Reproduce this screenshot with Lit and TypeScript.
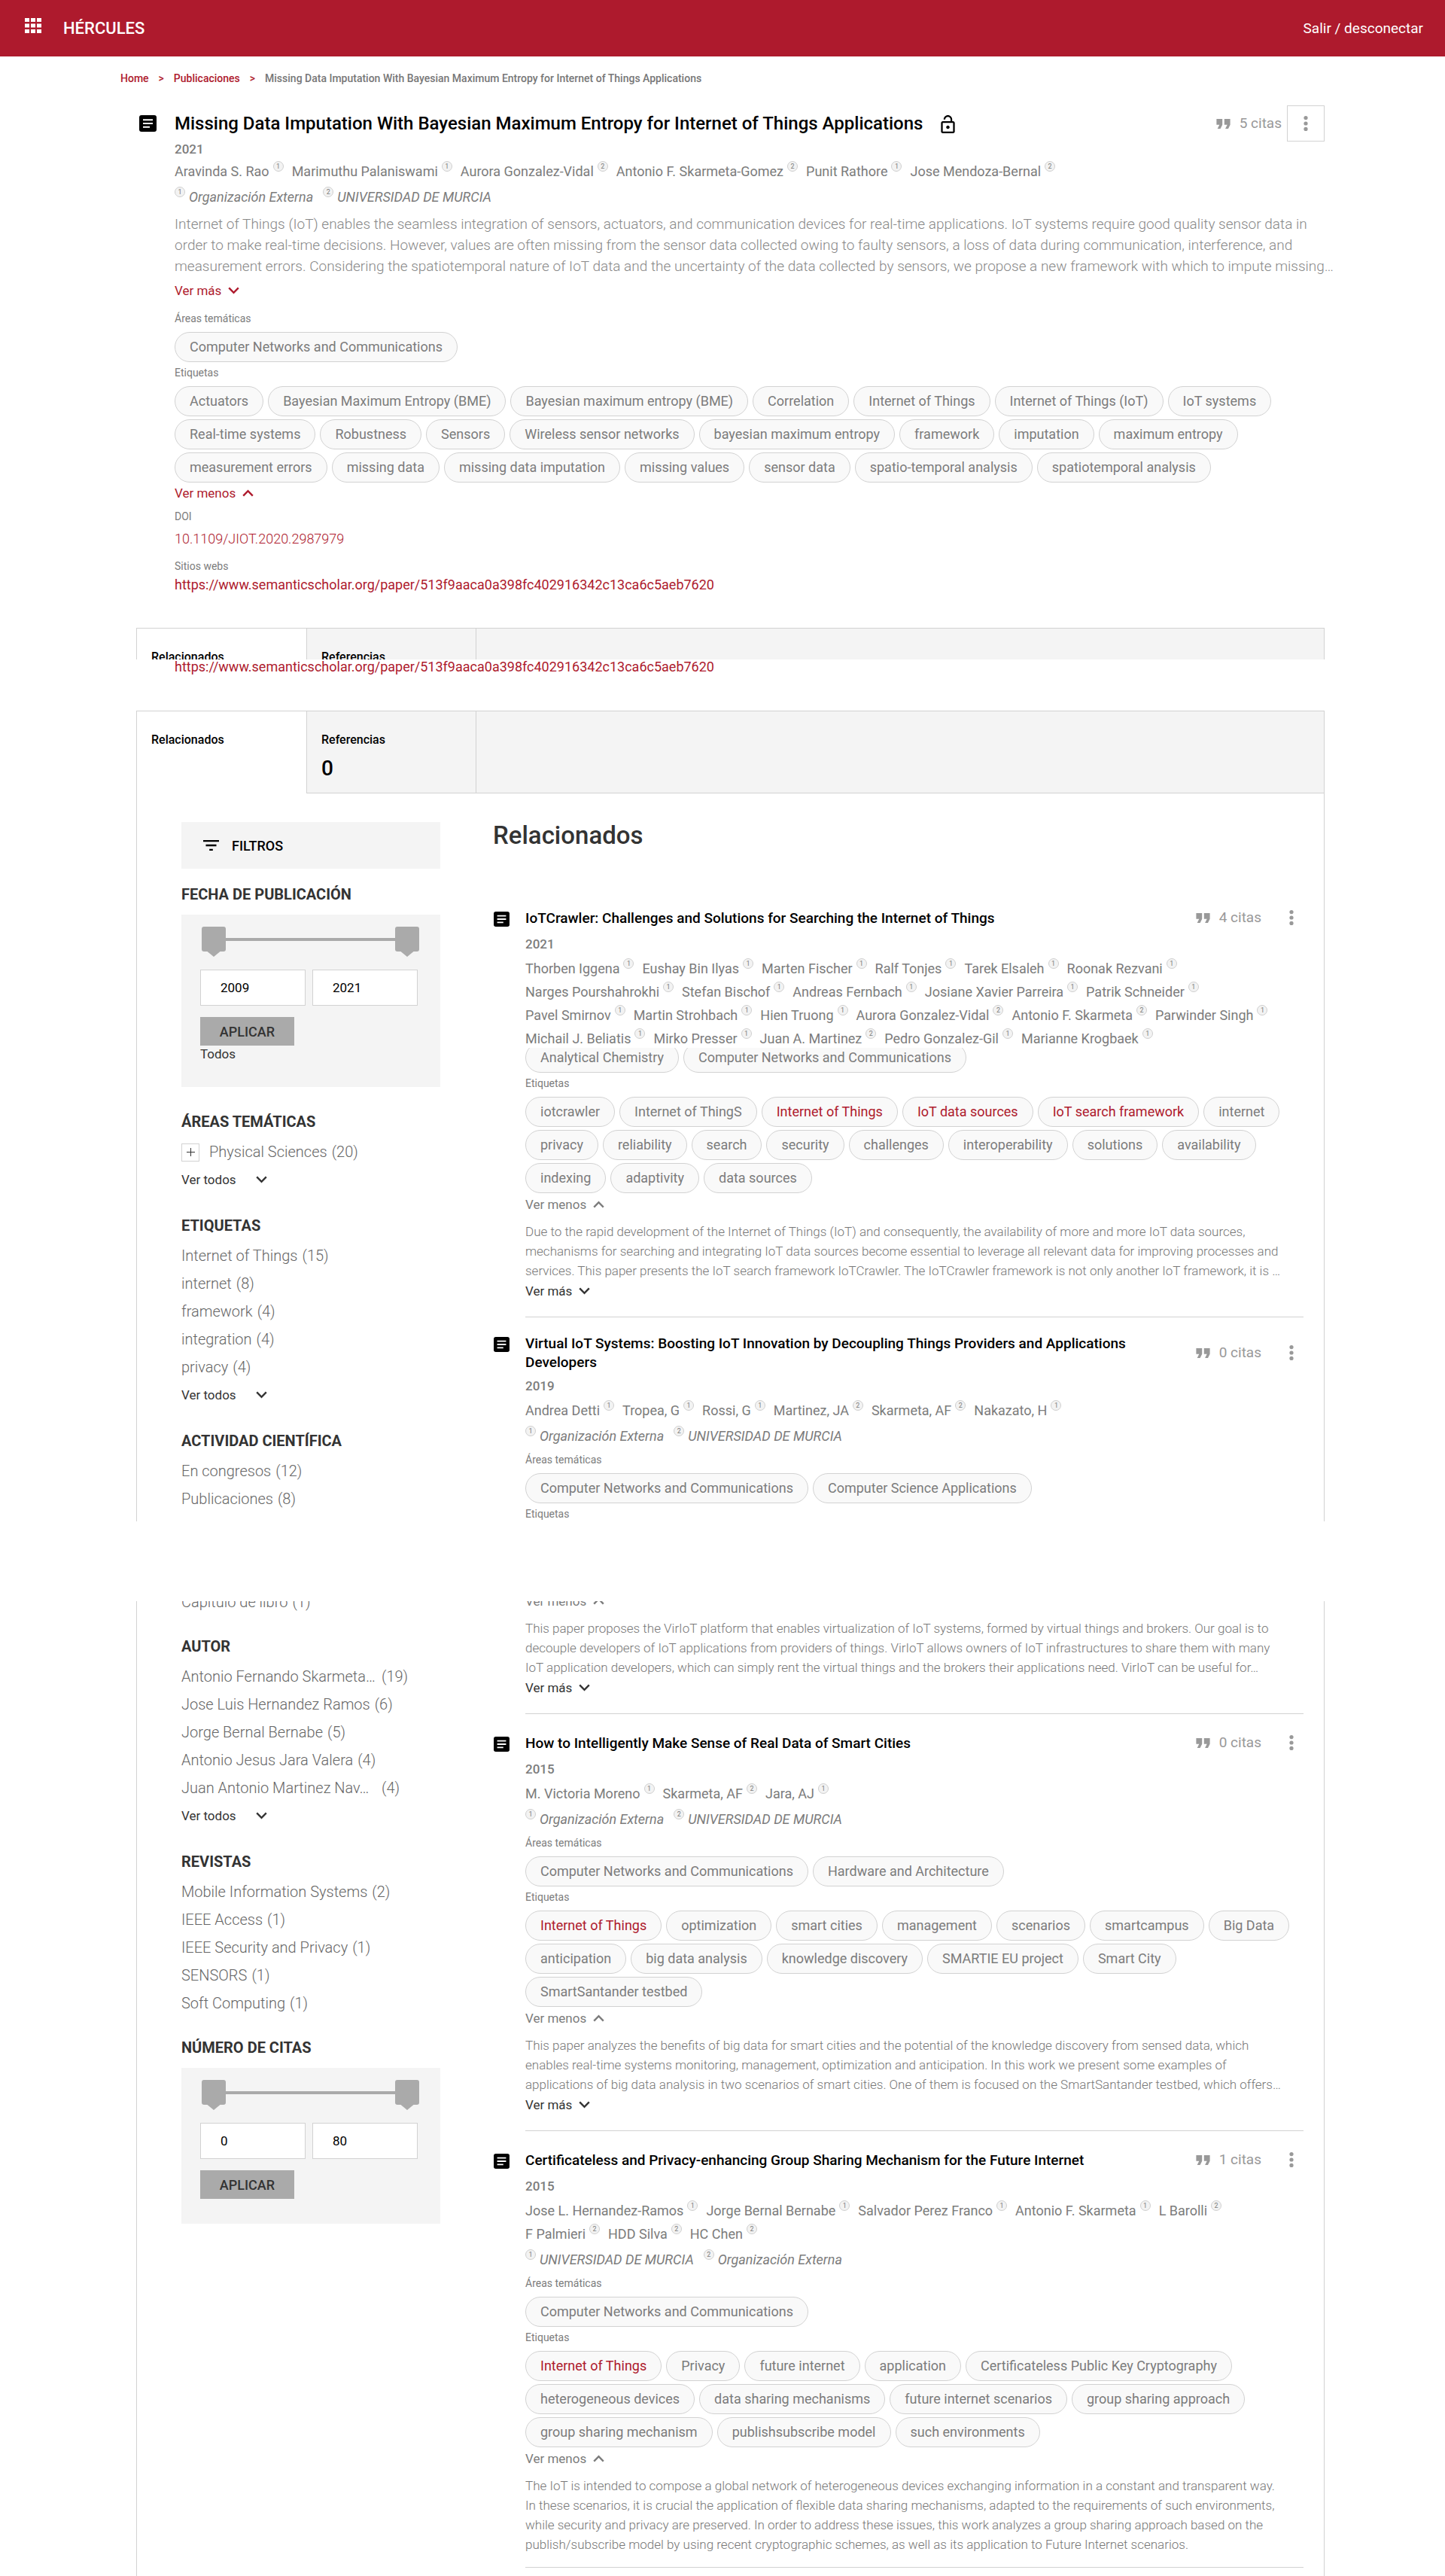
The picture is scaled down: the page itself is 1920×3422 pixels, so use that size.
import { LitElement, html, css, svg, nothing } from "lit";
import { customElement, property } from "lit/decorators.js";
import { classMap } from "lit/directives/class-map.js";

type Author = [name: string, org: number];
type Tag = string | { text: string; hot: true };
type FacetItem = { text: string; count: number; cut?: boolean; nested?: boolean };

interface Publication {
  title: string;
  year: string;
  citations: number;
  authors: Author[];
  orgs: string[];
  areas: Tag[];
  tags: Tag[];
  summary: string;
  more: boolean;
}

const hot = (text: string): Tag => ({ text, hot: true });

const DETAIL = {
  title: "Missing Data Imputation With Bayesian Maximum Entropy for Internet of Things Applications",
  year: "2021",
  authors: [
    ["Aravinda S. Rao", 1],
    ["Marimuthu Palaniswami", 1],
    ["Aurora Gonzalez-Vidal", 2],
    ["Antonio F. Skarmeta-Gomez", 2],
    ["Punit Rathore", 1],
    ["Jose Mendoza-Bernal", 2],
  ] as Author[],
  orgs: ["Organización Externa", "UNIVERSIDAD DE MURCIA"],
  summary:
    "Internet of Things (IoT) enables the seamless integration of sensors, actuators, and communication devices for real-time applications. IoT systems require good quality sensor data in order to make real-time decisions. However, values are often missing from the sensor data collected owing to faulty sensors, a loss of data during communication, interference, and measurement errors. Considering the spatiotemporal nature of IoT data and the uncertainty of the data collected by sensors, we propose a new framework with which to impute missing…",
  areas: ["Computer Networks and Communications"] as Tag[],
  tags: [
    "Actuators",
    "Bayesian Maximum Entropy (BME)",
    "Bayesian maximum entropy (BME)",
    "Correlation",
    "Internet of Things",
    "Internet of Things (IoT)",
    "IoT systems",
    "Real-time systems",
    "Robustness",
    "Sensors",
    "Wireless sensor networks",
    "bayesian maximum entropy",
    "framework",
    "imputation",
    "maximum entropy",
    "measurement errors",
    "missing data",
    "missing data imputation",
    "missing values",
    "sensor data",
    "spatio-temporal analysis",
    "spatiotemporal analysis",
  ] as Tag[],
  doi: "10.1109/JIOT.2020.2987979",
  url: "https://www.semanticscholar.org/paper/513f9aaca0a398fc402916342c13ca6c5aeb7620",
};

const CRAWLER: Publication = {
  title: "IoTCrawler: Challenges and Solutions for Searching the Internet of Things",
  year: "2021",
  citations: 4,
  authors: [
    ["Thorben Iggena", 1],
    ["Eushay Bin Ilyas", 1],
    ["Marten Fischer", 1],
    ["Ralf Tonjes", 1],
    ["Tarek Elsaleh", 1],
    ["Roonak Rezvani", 1],
    ["Narges Pourshahrokhi", 1],
    ["Stefan Bischof", 1],
    ["Andreas Fernbach", 1],
    ["Josiane Xavier Parreira", 1],
    ["Patrik Schneider", 1],
    ["Pavel Smirnov", 1],
    ["Martin Strohbach", 1],
    ["Hien Truong", 1],
    ["Aurora Gonzalez-Vidal", 2],
    ["Antonio F. Skarmeta", 2],
    ["Parwinder Singh", 1],
    ["Michail J. Beliatis", 1],
    ["Mirko Presser", 1],
    ["Juan A. Martinez", 2],
    ["Pedro Gonzalez-Gil", 1],
    ["Marianne Krogbaek", 1],
  ],
  orgs: [],
  areas: ["Analytical Chemistry", "Computer Networks and Communications"],
  tags: [
    "iotcrawler",
    "Internet of ThingS",
    hot("Internet of Things"),
    hot("IoT data sources"),
    hot("IoT search framework"),
    "internet",
    "privacy",
    "reliability",
    "search",
    "security",
    "challenges",
    "interoperability",
    "solutions",
    "availability",
    "indexing",
    "adaptivity",
    "data sources",
  ],
  summary:
    "Due to the rapid development of the Internet of Things (IoT) and consequently, the availability of more and more IoT data sources, mechanisms for searching and integrating IoT data sources become essential to leverage all relevant data for improving processes and services. This paper presents the IoT search framework IoTCrawler. The IoTCrawler framework is not only another IoT framework, it is …",
  more: true,
};

const VIRIOT: Publication = {
  title: "Virtual IoT Systems: Boosting IoT Innovation by Decoupling Things Providers and Applications Developers",
  year: "2019",
  citations: 0,
  authors: [
    ["Andrea Detti", 1],
    ["Tropea, G", 1],
    ["Rossi, G", 1],
    ["Martinez, JA", 2],
    ["Skarmeta, AF", 2],
    ["Nakazato, H", 1],
  ],
  orgs: ["Organización Externa", "UNIVERSIDAD DE MURCIA"],
  areas: ["Computer Networks and Communications", "Computer Science Applications"],
  tags: [],
  summary:
    "This paper proposes the VirIoT platform that enables virtualization of IoT systems, formed by virtual things and brokers. Our goal is to decouple developers of IoT applications from providers of things. VirIoT allows owners of IoT infrastructures to share them with many IoT application developers, which can simply rent the virtual things and the brokers their applications need. VirIoT can be useful for…",
  more: true,
};

const SMART_CITIES: Publication = {
  title: "How to Intelligently Make Sense of Real Data of Smart Cities",
  year: "2015",
  citations: 0,
  authors: [
    ["M. Victoria Moreno", 1],
    ["Skarmeta, AF", 2],
    ["Jara, AJ", 1],
  ],
  orgs: ["Organización Externa", "UNIVERSIDAD DE MURCIA"],
  areas: ["Computer Networks and Communications", "Hardware and Architecture"],
  tags: [
    hot("Internet of Things"),
    "optimization",
    "smart cities",
    "management",
    "scenarios",
    "smartcampus",
    "Big Data",
    "anticipation",
    "big data analysis",
    "knowledge discovery",
    "SMARTIE EU project",
    "Smart City",
    "SmartSantander testbed",
  ],
  summary:
    "This paper analyzes the benefits of big data for smart cities and the potential of the knowledge discovery from sensed data, which enables real-time systems monitoring, management, optimization and anticipation. In this work we present some examples of applications of big data analysis in two scenarios of smart cities. One of them is focused on the SmartSantander testbed, which offers…",
  more: true,
};

const GROUP_SHARING: Publication = {
  title: "Certificateless and Privacy-enhancing Group Sharing Mechanism for the Future Internet",
  year: "2015",
  citations: 1,
  authors: [
    ["Jose L. Hernandez-Ramos", 1],
    ["Jorge Bernal Bernabe", 1],
    ["Salvador Perez Franco", 1],
    ["Antonio F. Skarmeta", 1],
    ["L Barolli", 2],
    ["F Palmieri", 2],
    ["HDD Silva", 2],
    ["HC Chen", 2],
  ],
  orgs: ["UNIVERSIDAD DE MURCIA", "Organización Externa"],
  areas: ["Computer Networks and Communications"],
  tags: [
    hot("Internet of Things"),
    "Privacy",
    "future internet",
    "application",
    "Certificateless Public Key Cryptography",
    "heterogeneous devices",
    "data sharing mechanisms",
    "future internet scenarios",
    "group sharing approach",
    "group sharing mechanism",
    "publishsubscribe model",
    "such environments",
  ],
  summary:
    "The IoT is intended to compose a global network of heterogeneous devices exchanging information in a constant and transparent way. In these scenarios, it is crucial the application of flexible data sharing mechanisms, adapted to the requirements of such environments, while security and privacy are preserved. In order to address these issues, this work analyzes a group sharing approach based on the publish/subscribe model by using recent cryptographic schemes, as well as its application to Future Internet scenarios.",
  more: false,
};

const iconApps = html`<svg width="22" height="20" viewBox="0 0 22 20" fill="currentColor" aria-hidden="true">
  ${[0, 1, 2].map((r) => [0, 1, 2].map((c) => svg`<rect x=${c * 8} y=${r * 7.5} width="6" height="5"></rect>`))}
</svg>`;

const iconArticle = html`<svg class="doc" viewBox="0 0 23 22" aria-hidden="true">
  <rect width="23" height="22" rx="3" fill="#000"></rect>
  <path d="M5 6.2H18M5 11H18M5 15.8H14" stroke="#fff" stroke-width="2"></path>
</svg>`;

const iconLock = html`<svg width="19" height="24" viewBox="4 1 16 21" fill="#000" role="img" aria-label="Acceso abierto">
  <path
    d="M12 17c1.1 0 2-.9 2-2s-.9-2-2-2-2 .9-2 2 .9 2 2 2zm6-9h-1V6c0-2.76-2.24-5-5-5S7 3.24 7 6h1.9c0-1.71 1.39-3.1 3.1-3.1 1.71 0 3.1 1.39 3.1 3.1v2H6c-1.1 0-2 .9-2 2v10c0 1.1.9 2 2 2h12c1.1 0 2-.9 2-2V10c0-1.1-.9-2-2-2zm0 12H6V10h12v10z"
  ></path>
</svg>`;

const iconQuote = html`<svg width="19" height="13" viewBox="5 7 14 10" fill="currentColor" aria-hidden="true">
  <path d="M6 17h3l2-4V7H5v6h3zm8 0h3l2-4V7h-6v6h3z"></path>
</svg>`;

const iconDots = html`<svg width="6" height="20" viewBox="0 0 6 20" fill="currentColor" aria-hidden="true">
  <circle cx="3" cy="2.6" r="2.6"></circle><circle cx="3" cy="10" r="2.6"></circle><circle cx="3" cy="17.4" r="2.6"></circle>
</svg>`;

const iconFilter = html`<svg width="21" height="14" viewBox="3 6 18 12" fill="#000" aria-hidden="true">
  <path d="M10 18h4v-2h-4zM3 6v2h18V6zm3 7h12v-2H6z"></path>
</svg>`;

const chevron = (up: boolean) => html`<svg width="15" height="10" viewBox="0 0 15 10" fill="none" stroke="currentColor" stroke-width="2.4" aria-hidden="true">
  <path d=${up ? "M1.2 8.6 7.5 2.2 13.8 8.6" : "M1.2 1.4 7.5 7.8 13.8 1.4"}></path>
</svg>`;

const base = css`
  *,
  *::before,
  *::after {
    box-sizing: border-box;
  }
  a {
    color: inherit;
    text-decoration: none;
  }
  button {
    font: inherit;
    color: inherit;
    background: none;
    border: 0;
    padding: 0;
    margin: 0;
    cursor: pointer;
  }
  ul,
  ol,
  h1,
  h2,
  h3,
  p {
    list-style: none;
    margin: 0;
    padding: 0;
  }
  svg {
    display: block;
    flex: none;
  }
`;

const publicationStyles = css`
  .year {
    font-size: 17px;
    font-weight: 500;
    line-height: 20px;
    color: #7c7c7c;
  }
  .people {
    display: flex;
    flex-wrap: wrap;
    column-gap: 11px;
    font-size: 18px;
    line-height: 31px;
    color: #7c7c7c;
  }
  .person {
    display: flex;
    gap: 5px;
  }
  .orgs {
    margin-top: 3px;
    column-gap: 13px;
    font-style: italic;
  }
  .ref {
    width: 14px;
    height: 14px;
    margin-top: 2px;
    border: 1px solid #cfcfcf;
    border-radius: 50%;
    background: #f3f3f3;
    font-size: 9px;
    font-style: normal;
    line-height: 12px;
    text-align: center;
  }
  .label {
    font-size: 14px;
    line-height: 20px;
    color: #7c7c7c;
    margin: 4px 0 8px;
  }
  .pills {
    display: flex;
    flex-wrap: wrap;
    gap: 4px 6px;
  }
  .pill {
    display: block;
    height: 40px;
    padding: 0 19px;
    border: 1px solid #d2d2d2;
    border-radius: 20px;
    background: #f9f9f9;
    font-size: 18px;
    line-height: 38px;
    color: #7c7c7c;
  }
  .pill.hot {
    color: #ae1a2d;
  }
  .toggle {
    display: flex;
    align-items: center;
    gap: 9px;
    font-size: 17px;
    line-height: 24px;
  }
  .citations {
    display: flex;
    align-items: center;
    gap: 12px;
    font-size: 19px;
    line-height: 24px;
    color: #999;
    white-space: nowrap;
  }
  .menu {
    display: grid;
    place-items: center;
    color: #999;
  }
`;

const people = (authors: Author[]) => html`<ul class="people">
  ${authors.map(([name, org]) => html`<li class="person"><a href="#">${name}</a><span class="ref">${org}</span></li>`)}
</ul>`;

const organisations = (orgs: string[]) => html`<ul class="people orgs">
  ${orgs.map((name, i) => html`<li class="person"><span class="ref">${i + 1}</span>${name}</li>`)}
</ul>`;

const pills = (tags: Tag[]) => html`<ul class="pills">
  ${tags.map((t) => {
    const isHot = typeof t !== "string";
    return html`<li><a href="#" class=${classMap({ pill: true, hot: isHot })}>${typeof t === "string" ? t : t.text}</a></li>`;
  })}
</ul>`;

const citations = (n: number) => html`<span class="citations">${iconQuote}<span>${n} citas</span></span>`;

@customElement("publication-item")
export class PublicationItem extends LitElement {
  @property({ attribute: false }) data!: Publication;
  /** Which stretch of the entry is rendered: all of it, its head, or its tail. */
  @property() stretch: "full" | "head" | "tail" = "full";

  static styles = [
    base,
    publicationStyles,
    css`
      :host {
        display: block;
      }
      .item.full,
      .item.head {
        padding-top: 22px;
      }
      .row {
        display: flex;
        align-items: center;
        min-height: 32px;
        margin-bottom: 9px;
      }
      .lead {
        flex: 1;
        display: flex;
        align-items: flex-start;
        gap: 21px;
        padding-right: 24px;
      }
      .doc {
        width: 21px;
        height: 20px;
        margin: 4px 0 0 1px;
      }
      .title {
        font-size: 19px;
        font-weight: 500;
        line-height: 25px;
        color: #000;
      }
      .body {
        margin-left: 43px;
      }
      .closed {
        padding-bottom: 17px;
        border-bottom: 1px solid #d2d2d2;
      }
      .menu {
        width: 32px;
        height: 32px;
        margin-left: 24px;
      }
      .year {
        margin-bottom: 7px;
      }
      .orgs {
        margin-bottom: 6px;
      }
      .label:last-child {
        margin-bottom: 0;
      }
      .crop {
        overflow: hidden;
        margin-top: -3px;
      }
      .crop .pills {
        margin-top: -7px;
      }
      .less {
        color: #7c7c7c;
        margin: 3px 0 11px;
      }
      .tail .less {
        margin-top: -12px;
      }
      .item.tail {
        overflow: hidden;
      }
      .summary {
        padding-right: 25px;
        font-size: 17px;
        font-weight: 300;
        line-height: 26px;
        color: #777;
      }
      .more {
        color: #333;
        margin: 2px 0 5px;
      }
    `,
  ];

  render() {
    const d = this.data;
    const tail = this.stretch === "tail";
    const head = this.stretch === "head";
    return html`<article class="item ${this.stretch}">
      ${tail
        ? nothing
        : html`<header class="row">
            <div class="lead">
              ${iconArticle}
              <h3 class="title"><a href="#">${d.title}</a></h3>
            </div>
            ${citations(d.citations)}
            <button class="menu" aria-label="Acciones">${iconDots}</button>
          </header>`}
      <div class=${classMap({ body: true, closed: !head })}>
        ${tail
          ? nothing
          : html`<p class="year">${d.year}</p>
              ${people(d.authors)}
              ${d.orgs.length
                ? html`${organisations(d.orgs)}
                    <p class="label">Áreas temáticas</p>
                    ${pills(d.areas)}`
                : html`<div class="crop">${pills(d.areas)}</div>`}
              <p class="label">Etiquetas</p>
              ${d.tags.length ? pills(d.tags) : nothing}`}
        ${head
          ? nothing
          : html`<button class="toggle less">Ver menos ${chevron(true)}</button>
              <p class="summary">${d.summary}</p>
              ${d.more ? html`<button class="toggle more">Ver más ${chevron(false)}</button>` : nothing}`}
      </div>
    </article>`;
  }
}

@customElement("facet-list")
export class FacetList extends LitElement {
  @property() heading = "";
  @property({ attribute: false }) items: FacetItem[] = [];
  @property({ type: Boolean }) expandable = false;

  static styles = [
    base,
    css`
      :host {
        display: block;
      }
      .heading {
        margin-bottom: 10px;
        font-size: 20px;
        font-weight: 700;
        line-height: 24px;
        color: #333;
      }
      .item {
        display: flex;
        align-items: center;
        gap: 6px;
        font-size: 20px;
        font-weight: 300;
        line-height: 37px;
        color: #666;
      }
      .item a {
        display: flex;
        gap: 6px;
      }
      .cut {
        min-width: 260px;
      }
      .expand {
        display: grid;
        place-items: center;
        width: 24px;
        height: 24px;
        margin-right: 7px;
        border: 1px solid #d2d2d2;
        background: #fff;
        color: #333;
      }
      .all {
        display: flex;
        align-items: center;
        gap: 26px;
        margin: 6px 0 9px;
        font-size: 17px;
        line-height: 24px;
        color: #333;
      }
    `,
  ];

  render() {
    return html`<section>
      ${this.heading ? html`<h2 class="heading">${this.heading}</h2>` : nothing}
      <ul>
        ${this.items.map(
          (i) => html`<li class="item">
            ${i.nested
              ? html`<button class="expand" aria-label="Desplegar">
                  <svg width="11" height="11" viewBox="0 0 11 11" stroke="currentColor" stroke-width="1"><path d="M5.5 0V11M0 5.5H11"></path></svg>
                </button>`
              : nothing}
            <a href="#"><span class=${i.cut ? "cut" : ""}>${i.text}</span><span>(${i.count})</span></a>
          </li>`,
        )}
      </ul>
      ${this.expandable ? html`<button class="all">Ver todos ${chevron(false)}</button>` : nothing}
    </section>`;
  }
}

@customElement("facet-range")
export class FacetRange extends LitElement {
  @property() heading = "";
  @property({ type: Number }) from = 0;
  @property({ type: Number }) to = 0;
  @property({ type: Boolean }) resettable = false;

  static styles = [
    base,
    css`
      :host {
        display: block;
      }
      .heading {
        margin-bottom: 15px;
        font-size: 20px;
        font-weight: 700;
        line-height: 24px;
        color: #333;
      }
      .box {
        padding: 16px 30px 33px 25px;
        background: #f4f4f4;
      }
      .slider {
        position: relative;
        height: 40px;
        margin: 0 -2px 17px 2px;
      }
      .slider::before {
        content: "";
        position: absolute;
        left: 16px;
        right: 16px;
        top: 15px;
        height: 4px;
        background: #aaa;
      }
      .thumb {
        position: absolute;
        inset: 0;
        width: 100%;
        height: 40px;
        margin: 0;
        background: none;
        pointer-events: none;
        -webkit-appearance: none;
        appearance: none;
      }
      .thumb::-webkit-slider-thumb {
        -webkit-appearance: none;
        width: 32px;
        height: 40px;
        border: 0;
        background: #aaa;
        clip-path: path("M3 0H29a3 3 0 0 1 3 3V30a3 3 0 0 1-3 3H24.500L16 40L7.500 33H3a3 3 0 0 1-3-3V3a3 3 0 0 1 3-3Z");
        pointer-events: auto;
      }
      .fields {
        display: grid;
        grid-template-columns: 1fr 1fr;
        gap: 9px;
      }
      .field {
        width: 100%;
        height: 48px;
        padding: 0 26px;
        border: 1px solid #d2d2d2;
        border-radius: 0;
        background: #fff;
        font: inherit;
        font-size: 17px;
        color: #000;
      }
      .apply {
        display: block;
        width: 125px;
        height: 38px;
        margin-top: 15px;
        background: #aaa;
        font-size: 18px;
        font-weight: 500;
        color: #333;
      }
      .reset {
        display: block;
        font-size: 17px;
        line-height: 22px;
        color: #333;
      }
    `,
  ];

  render() {
    return html`<section>
      <h2 class="heading">${this.heading}</h2>
      <form class="box" @submit=${(e: Event) => e.preventDefault()}>
        <div class="slider">
          <input class="thumb" type="range" aria-label="Mínimo" min=${this.from} max=${this.to} .value=${String(this.from)} />
          <input class="thumb" type="range" aria-label="Máximo" min=${this.from} max=${this.to} .value=${String(this.to)} />
        </div>
        <div class="fields">
          <input class="field" type="text" aria-label="Desde" .value=${String(this.from)} />
          <input class="field" type="text" aria-label="Hasta" .value=${String(this.to)} />
        </div>
        <button class="apply" type="submit">APLICAR</button>
        ${this.resettable ? html`<button class="reset" type="button">Todos</button>` : nothing}
      </form>
    </section>`;
  }
}

@customElement("app-root")
export class AppRoot extends LitElement {
  static styles = [
    base,
    publicationStyles,
    css`
      :host {
        display: block;
        background: #fff;
        font-family: Roboto, "Liberation Sans", sans-serif;
        font-size: 17px;
        color: #333;
      }
      .topbar {
        display: flex;
        align-items: center;
        height: 75px;
        padding: 0 29px 0 33px;
        background: #ae1a2d;
        color: #fff;
      }
      .apps {
        margin: 0 29px 8px 0;
      }
      .brand {
        flex: 1;
        font-size: 22px;
        font-weight: 500;
        line-height: 28px;
      }
      .logout {
        font-size: 19px;
        font-weight: 400;
      }
      .wrap {
        max-width: 1600px;
        margin: 0 auto;
      }
      .crumbs {
        display: flex;
        gap: 13px;
        padding: 19px 0 26px;
        font-size: 14px;
        font-weight: 500;
        line-height: 20px;
        color: #ae1a2d;
      }
      .here {
        color: #777;
      }
      .detail {
        display: grid;
        grid-template-columns: 23px minmax(0, 1fr);
        column-gap: 24px;
        padding-left: 25px;
      }
      .detail .doc {
        width: 23px;
        height: 22px;
        margin-top: 13px;
      }
      .titlebar {
        display: flex;
        align-items: center;
        height: 48px;
      }
      .titlebar .menu {
        width: 50px;
        height: 48px;
        margin-left: 7px;
        border: 1px solid #d2d2d2;
      }
      .title {
        font-size: 24px;
        font-weight: 500;
        line-height: 32px;
        color: #000;
      }
      .lock {
        flex: 1;
        padding: 2px 0 0 24px;
      }
      .info {
        grid-column: 2;
      }
      .info .year {
        margin-bottom: 4px;
      }
      .summary {
        margin: 7px -16px 0 0;
        font-size: 19px;
        font-weight: 300;
        line-height: 28px;
        color: #888;
      }
      .info .toggle {
        color: #ae1a2d;
      }
      .open {
        margin: 6px 0 15px;
      }
      .close {
        margin: 2px 0 9px;
      }
      .value {
        display: block;
        font-size: 18px;
        line-height: 24px;
        color: #ae1a2d;
      }
      .doi {
        font-weight: 300;
        margin-bottom: 14px;
      }
      .again {
        padding: 0 0 48px 72px;
        line-height: 20px;
      }
      .url {
        margin-top: -5px;
      }
      .strip {
        margin-left: 21px;
        display: grid;
        grid-template-columns: 226px 225px minmax(0, 1fr);
        height: 110px;
        border: 1px solid #d2d2d2;
        border-bottom: 0;
      }
      .peek {
        overflow: hidden;
        height: 42px;
        margin-top: 45px;
      }
      .tab {
        display: block;
        padding: 28px 19px 0;
        background: #f4f4f4;
        border-bottom: 1px solid #d2d2d2;
        border-right: 1px solid #d2d2d2;
        color: #000;
      }
      .tab.active {
        background: #fff;
        border-bottom: 0;
      }
      .rest {
        padding: 0;
        border-right: 0;
      }
      .tabname {
        display: block;
        font-size: 16px;
        font-weight: 500;
        line-height: 20px;
        margin-bottom: 12px;
      }
      .count {
        display: block;
        font-size: 28px;
        font-weight: 500;
        line-height: 32px;
      }
      .panel {
        margin-left: 21px;
        display: grid;
        grid-template-columns: 344px minmax(0, 1fr);
        column-gap: 70px;
        padding: 0 27px 0 59px;
        border: solid #d2d2d2;
        border-width: 0 1px;
      }
      .second {
        margin-top: 106px;
        overflow: hidden;
        padding-bottom: 11px;
      }
      .filters {
        display: flex;
        flex-direction: column;
        gap: 28px;
      }
      .first .filters {
        padding-top: 38px;
      }
      .filterbar {
        display: flex;
        align-items: center;
        gap: 17px;
        height: 62px;
        margin-bottom: -6px;
        padding-left: 29px;
        background: #f4f4f4;
        font-size: 18px;
        font-weight: 500;
        color: #000;
      }
      .after {
        margin-top: 6px;
      }
      .clipped {
        margin-top: -17px;
      }
      .section {
        margin: 36px 0 51px;
        font-size: 33px;
        font-weight: 500;
        line-height: 40px;
        color: #333;
      }
    `,
  ];

  private strip() {
    return html`<nav class="strip">
      <a class="tab active" href="#"><span class="tabname">Relacionados</span></a>
      <a class="tab" href="#"><span class="tabname">Referencias</span><span class="count">0</span></a>
      <div class="tab rest"></div>
    </nav>`;
  }

  render() {
    const d = DETAIL;
    return html`
      <header class="topbar">
        <button class="apps" aria-label="Aplicaciones">${iconApps}</button>
        <a class="brand" href="#">HÉRCULES</a>
        <a class="logout" href="#">Salir / desconectar</a>
      </header>
      <main class="wrap">
        <nav class="crumbs">
          <a href="#">Home</a><span>&gt;</span><a href="#">Publicaciones</a><span>&gt;</span>
          <span class="here">${d.title}</span>
        </nav>
        <section class="detail">
          ${iconArticle}
          <div class="titlebar">
            <h1 class="title">${d.title}</h1>
            <span class="lock">${iconLock}</span>
            ${citations(5)}
            <button class="menu" aria-label="Acciones">${iconDots}</button>
          </div>
          <div class="info">
            <p class="year">${d.year}</p>
            ${people(d.authors)} ${organisations(d.orgs)}
            <p class="summary">${d.summary}</p>
            <button class="toggle open">Ver más ${chevron(false)}</button>
            <p class="label">Áreas temáticas</p>
            ${pills(d.areas)}
            <p class="label">Etiquetas</p>
            ${pills(d.tags)}
            <button class="toggle close">Ver menos ${chevron(true)}</button>
            <p class="label">DOI</p>
            <a class="value doi" href="#">${d.doi}</a>
            <p class="label">Sitios webs</p>
            <a class="value url" href="#">${d.url}</a>
          </div>
        </section>
        <div class="peek">${this.strip()}</div>
        <a class="value again" href="#">${d.url}</a>
        ${this.strip()}
        <div class="panel first">
          <aside class="filters">
            <div class="filterbar">${iconFilter} FILTROS</div>
            <facet-range heading="FECHA DE PUBLICACIÓN" from="2009" to="2021" resettable></facet-range>
            <facet-list
              class="after"
              heading="ÁREAS TEMÁTICAS"
              expandable
              .items=${[{ text: "Physical Sciences", count: 20, nested: true }]}
            ></facet-list>
            <facet-list
              heading="ETIQUETAS"
              expandable
              .items=${[
                { text: "Internet of Things", count: 15 },
                { text: "internet", count: 8 },
                { text: "framework", count: 4 },
                { text: "integration", count: 4 },
                { text: "privacy", count: 4 },
              ]}
            ></facet-list>
            <facet-list
              heading="ACTIVIDAD CIENTÍFICA"
              .items=${[
                { text: "En congresos", count: 12 },
                { text: "Publicaciones", count: 8 },
              ]}
            ></facet-list>
          </aside>
          <section>
            <h2 class="section">Relacionados</h2>
            <publication-item .data=${CRAWLER}></publication-item>
            <publication-item stretch="head" .data=${VIRIOT}></publication-item>
          </section>
        </div>
        <div class="panel second">
          <aside class="filters">
            <facet-list class="clipped" .items=${[{ text: "Capítulo de libro", count: 1 }]}></facet-list>
            <facet-list
              heading="AUTOR"
              expandable
              .items=${[
                { text: "Antonio Fernando Skarmeta…", count: 19, cut: true },
                { text: "Jose Luis Hernandez Ramos", count: 6 },
                { text: "Jorge Bernal Bernabe", count: 5 },
                { text: "Antonio Jesus Jara Valera", count: 4 },
                { text: "Juan Antonio Martinez Nav…", count: 4, cut: true },
              ]}
            ></facet-list>
            <facet-list
              heading="REVISTAS"
              .items=${[
                { text: "Mobile Information Systems", count: 2 },
                { text: "IEEE Access", count: 1 },
                { text: "IEEE Security and Privacy", count: 1 },
                { text: "SENSORS", count: 1 },
                { text: "Soft Computing", count: 1 },
              ]}
            ></facet-list>
            <facet-range heading="NÚMERO DE CITAS" from="0" to="80"></facet-range>
          </aside>
          <section>
            <publication-item stretch="tail" .data=${VIRIOT}></publication-item>
            <publication-item .data=${SMART_CITIES}></publication-item>
            <publication-item .data=${GROUP_SHARING}></publication-item>
          </section>
        </div>
      </main>
    `;
  }
}
